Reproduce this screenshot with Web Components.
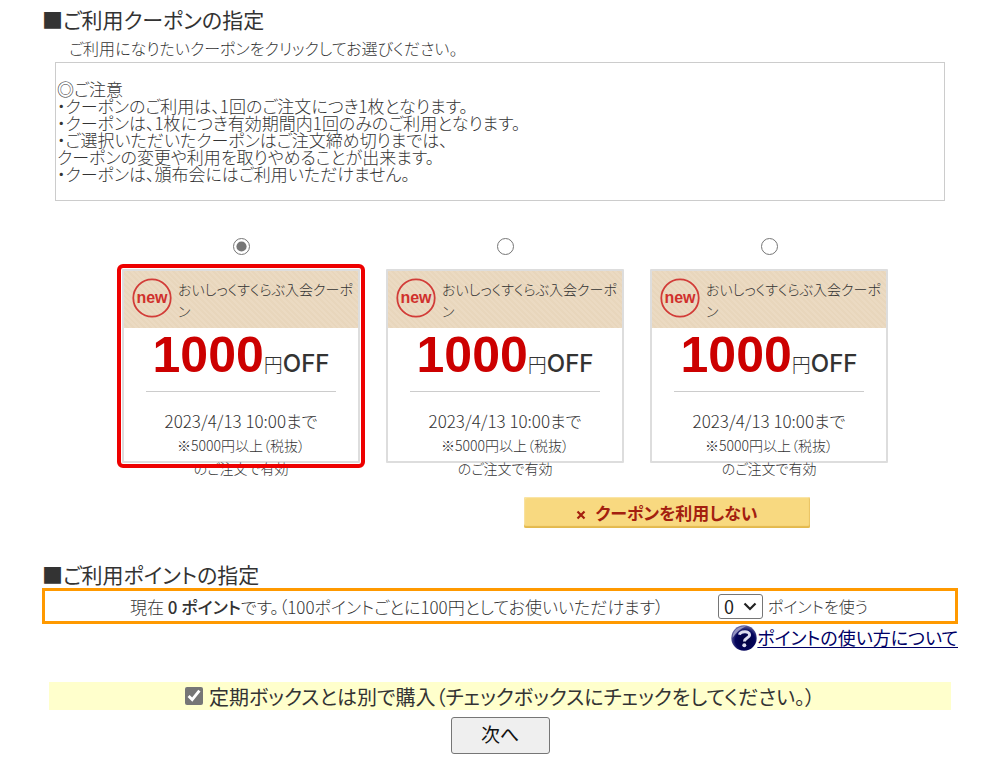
<!DOCTYPE html>
<html lang="ja">
<head>
<meta charset="utf-8">
<meta name="viewport" content="width=device-width, initial-scale=1">
<title>ご利用クーポンの指定</title>
<style>
  body {
    margin: 0;
    background: #fff;
    color: #333;
    font-family: "Noto Sans CJK JP", sans-serif;
    font-feature-settings: "palt";
    font-weight: 300;
    font-size: 16px;
  }
</style>
</head>
<body>
<order-page></order-page>

<template id="section-heading">
  <style>
    :host { display: block; }
    h2 { margin: 0; font-size: 21px; line-height: 28px; font-weight: 400; }
  </style>
  <h2>■<slot></slot></h2>
</template>

<template id="notice-box">
  <style>
    :host { display: block; border: 1px solid #ccc; padding: 17px 0 18px 1px; font-size: 17px; line-height: 17px; }
  </style>
  <slot></slot>
</template>

<template id="coupon-card">
  <style>
    :host {
      display: block; box-sizing: border-box; height: 194px;
      border: 2px solid #ddd; background: #fff; text-align: center;
      outline: var(--ring, none); outline-offset: 1px; border-radius: 1px;
    }
    header {
      box-sizing: border-box; height: 57px; padding: 7px 3px 0 8px; display: flex; gap: 6px;
      background: repeating-linear-gradient(45deg, #ebdac2 0 2px, #e8d6bc 2px 4px);
      text-align: left; font-size: 14px; line-height: 22px;
    }
    svg { flex: none; width: 40px; height: 40px; }
    .title { flex: 1; word-break: break-all; }
    .price { display: flex; justify-content: center; align-items: baseline; line-height: 54px; height: 63px; }
    .amount { font: 700 50px/54px "Liberation Sans", sans-serif; color: #c00; }
    .yen { font-size: 19px; }
    .off { font: 500 24px/54px Inter, sans-serif; }
    hr { border: 0; border-top: 1px solid #ccc; margin: 0 22px 15px; }
    .until { font-size: 17px; line-height: 27px; }
    .terms { font-size: 14px; line-height: 23px; }
    p { margin: 0; }
  </style>
  <header>
    <svg viewBox="0 0 40 40" aria-hidden="true">
      <circle cx="20" cy="20" r="18.7" fill="none" stroke="#d23c38" stroke-width="1.8"/>
      <text x="20" y="25" text-anchor="middle" font-family="Liberation Sans, sans-serif" font-weight="700" font-size="16" fill="#d0302c">new</text>
    </svg>
    <div class="title"><slot name="title"></slot></div>
  </header>
  <div class="price"><span class="amount"><slot name="amount"></slot></span><span class="yen">円</span><span class="off">OFF</span></div>
  <hr>
  <p class="until"><slot name="until"></slot></p>
  <p class="terms"><slot name="terms"></slot></p>
</template>

<template id="coupon-picker">
  <style>
    :host { display: block; }
    .list { display: grid; grid-template-columns: repeat(3, 238px); gap: 0 26px; justify-content: center; padding-left: 10px; }
    label { display: flex; flex-direction: column; }
    input { width: 17px; height: 17px; margin: 0 0 14px; align-self: center; accent-color: #767676; }
    input:checked + coupon-card { --ring: 4px solid #ee0000; }
    .none { display: flex; justify-content: flex-end; margin: 34px 148px 0 0; }
    button {
      width: 286px; height: 31px; padding: 0; border: 0; border-radius: 2px;
      background: #f8d980; box-shadow: inset 0 -2px 1px #e3b94d, inset 1px 1px 1px #fbe7ab, inset -1px 0 1px #e9c568;
      color: #a3200f; font: 700 17px/28px "Noto Sans CJK JP", sans-serif; font-feature-settings: "palt";
    }
    svg { width: 10px; height: 10px; margin-right: 9px; }
  </style>
  <div class="list"></div>
  <div class="none"><button type="button"><svg viewBox="0 0 10 10" aria-hidden="true"><path d="M1.5 1.5 8.5 8.5M8.5 1.5 1.5 8.5" stroke="#a3200f" stroke-width="2.2"/></svg>クーポンを利用しない</button></div>
</template>

<template id="points-box">
  <style>
    :host { display: block; }
    .row { display: flex; align-items: center; box-sizing: border-box; height: 36px; border: 3px solid #f90; padding-left: 85px; }
    .state { width: 588px; font-size: 17px; white-space: nowrap; }
    b { font-weight: 500; }
    label { margin-left: 5px; }
    select {
      appearance: none; box-sizing: border-box; width: 45px; height: 25px; padding: 0 0 0 5px;
      border: 1px solid #767676; border-radius: 3px; color: #222;
      background: #fff url("data:image/svg+xml,%3Csvg xmlns='http://www.w3.org/2000/svg' viewBox='0 0 14 9'%3E%3Cpath d='M1.5 1.5 7 7l5.500-5.500' fill='none' stroke='%23222' stroke-width='2.200'/%3E%3C/svg%3E") no-repeat right 5px center / 14px 9px;
      font: 400 18px/22px "Noto Sans CJK JP", sans-serif;
    }
    .help { display: flex; justify-content: flex-end; align-items: center; height: 26px; }
    svg { width: 26px; height: 26px; margin-top: 2px; }
    a { color: #000066; font-size: 18px; line-height: 26px; font-weight: 400; text-underline-offset: 2px; }
  </style>
  <div class="row">
    <span class="state">現在 <b><slot name="balance"></slot> ポイント</b>です。（100ポイントごとに100円としてお使いいただけます）</span>
    <select id="use"><option>0</option></select>
    <label for="use">ポイントを使う</label>
  </div>
  <div class="help">
    <svg viewBox="0 0 26 26" aria-hidden="true">
      <defs><radialGradient id="ball" cx=".55" cy=".6" r=".6">
        <stop offset="0" stop-color="#00003c"/><stop offset=".65" stop-color="#05055c"/><stop offset="1" stop-color="#6a6aa6"/>
      </radialGradient></defs>
      <circle cx="13" cy="13" r="12.700" fill="url(#ball)"/>
      <path d="M1.500 13C1.500 5 8 .8 15 1.200 9 4 5 8 1.500 13Z" fill="#b8b8dc" opacity=".7"/>
      <path d="M8.500 9.800C9.200 6.300 18.600 5.400 18.600 9.900c0 3.300-5.200 3.100-5.200 6.600" fill="none" stroke="#dcdcf0" stroke-width="3"/>
      <circle cx="13.300" cy="20.300" r="2" fill="#dcdcf0"/>
    </svg>
    <a href="#points"><slot name="help"></slot></a>
  </div>
</template>

<template id="order-footer">
  <style>
    :host { display: block; }
    .bar { display: flex; justify-content: center; align-items: center; gap: 6px; height: 28px; margin: 0 7px; background: #ffc; font-size: 20px; font-weight: 400; }
    input { width: 18px; height: 18px; margin: 0; accent-color: #767676; }
    .next { text-align: center; margin-top: 7px; }
    button { width: 99px; height: 37px; padding: 0 0 3px; border: 1px solid #767676; border-radius: 3px; background: #efefef; color: #111; font: 400 19px/28px "Noto Sans CJK JP", sans-serif; }
  </style>
  <div class="bar"><input type="checkbox" id="separate" checked><label for="separate"><slot></slot></label></div>
  <div class="next"><button type="submit">次へ</button></div>
</template>

<template id="order-page">
  <style>
    :host { display: block; }
    main { padding: 5px 42px 8px; }
    .lead { margin: 2px 0 0 27px; line-height: 27px; font-size: 16px; }
    notice-box { margin: 0 13px; }
    coupon-picker { margin-top: 37px; }
    .points { margin-top: 32px; }
    order-footer { margin-top: 32px; }
    p { margin: 0; }
  </style>
  <main>
    <section-heading>ご利用クーポンの指定</section-heading>
    <p class="lead">ご利用になりたいクーポンをクリックしてお選びください。</p>
    <notice-box>
      <p>◎ご注意</p>
      <p>・クーポンのご利用は、1回のご注文につき1枚となります。</p>
      <p>・クーポンは、1枚につき有効期間内1回のみのご利用となります。</p>
      <p>・ご選択いただいたクーポンはご注文締め切りまでは、</p>
      <p>クーポンの変更や利用を取りやめることが出来ます。</p>
      <p>・クーポンは、頒布会にはご利用いただけません。</p>
    </notice-box>
    <coupon-picker></coupon-picker>
    <section-heading class="points">ご利用ポイントの指定</section-heading>
    <points-box><span slot="balance">0</span><span slot="help">ポイントの使い方について</span></points-box>
    <order-footer>定期ボックスとは別で購入（チェックボックスにチェックをしてください。）</order-footer>
  </main>
</template>

<script>
  class TemplateElement extends HTMLElement {
    constructor() {
      super();
      const template = document.getElementById(this.localName);
      this.attachShadow({ mode: "open" }).append(template.content.cloneNode(true));
    }
  }

  class CouponPicker extends TemplateElement {
    connectedCallback() {
      const coupon = { title: "おいしっくすくらぶ入会クーポン", amount: "1000", until: "2023/4/13 10:00まで", terms: "※5000円以上（税抜）<br>のご注文で有効" };
      this.shadowRoot.querySelector(".list").innerHTML = [coupon, coupon, coupon].map((c, i) => `
        <label>
          <input type="radio" name="coupon" value="${i}" ${i === 0 ? "checked" : ""}>
          <coupon-card>
            <span slot="title">${c.title}</span><span slot="amount">${c.amount}</span>
            <span slot="until">${c.until}</span><span slot="terms">${c.terms}</span>
          </coupon-card>
        </label>`).join("");
    }
  }

  customElements.define("section-heading", class extends TemplateElement {});
  customElements.define("notice-box", class extends TemplateElement {});
  customElements.define("coupon-card", class extends TemplateElement {});
  customElements.define("coupon-picker", CouponPicker);
  customElements.define("points-box", class extends TemplateElement {});
  customElements.define("order-footer", class extends TemplateElement {});
  customElements.define("order-page", class extends TemplateElement {});
</script>
</body>
</html>
